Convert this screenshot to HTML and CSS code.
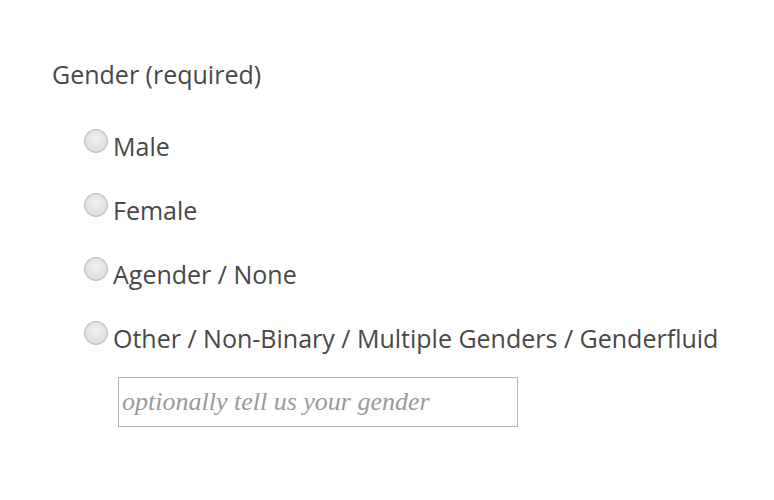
FILE: index.html
```html
<!DOCTYPE html>
<html>
<head>
<meta charset="utf-8">
<link rel="stylesheet" href="styles.css">
</head>
<body>
<fieldset class="field">
  <legend class="label">Gender (required)</legend>
  <div class="options">
    <label class="option"><span class="radio"></span><span class="opt-text">Male</span></label>
    <label class="option"><span class="radio"></span><span class="opt-text">Female</span></label>
    <label class="option"><span class="radio"></span><span class="opt-text">Agender / None</span></label>
    <label class="option"><span class="radio"></span><span class="opt-text">Other / Non-Binary / Multiple Genders / Genderfluid</span></label>
  </div>
  <div class="other-wrap">
    <input class="other-input" type="text" placeholder="optionally tell us your gender">
  </div>
</fieldset>
</body>
</html>
```
FILE: styles.css
```css
html, body {
  margin: 0;
  padding: 0;
  background: #fff;
}
body {
  font-family: "Open Sans", "Liberation Sans", sans-serif;
  color: #484848;
}
.field {
  border: 0;
  margin: 0;
  padding: 56px 0 0 52px;
}
.label {
  float: left;
  width: 100%;
  padding: 0;
  font-size: 25px;
  line-height: 36px;
  margin-bottom: 36px;
}
.options {
  clear: both;
  display: flex;
  flex-direction: column;
  gap: 28px;
  padding-left: 32px;
}
.option {
  display: flex;
  align-items: flex-start;
  font-size: 25px;
  line-height: 36px;
}
.radio {
  width: 24px;
  height: 24px;
  border-radius: 50%;
  box-sizing: border-box;
  border: 1px solid #b4b4b4;
  background: radial-gradient(circle at 50% 40%, #f2f2f2 0%, #e2e2e2 55%, #cfcfcf 100%);
  margin-top: 1px;
  margin-right: 5px;
  flex: none;
}
.other-wrap {
  padding: 21px 0 0 66px;
}
.other-input {
  width: 400px;
  height: 50px;
  box-sizing: border-box;
  border: 1px solid #b5b5b5;
  padding: 0 3px;
  font-family: "Liberation Serif", serif;
  font-style: italic;
  font-size: 26px;
  color: #444;
  outline: none;
}
.other-input::placeholder {
  color: #9a9a9a;
  font-style: italic;
}
```
